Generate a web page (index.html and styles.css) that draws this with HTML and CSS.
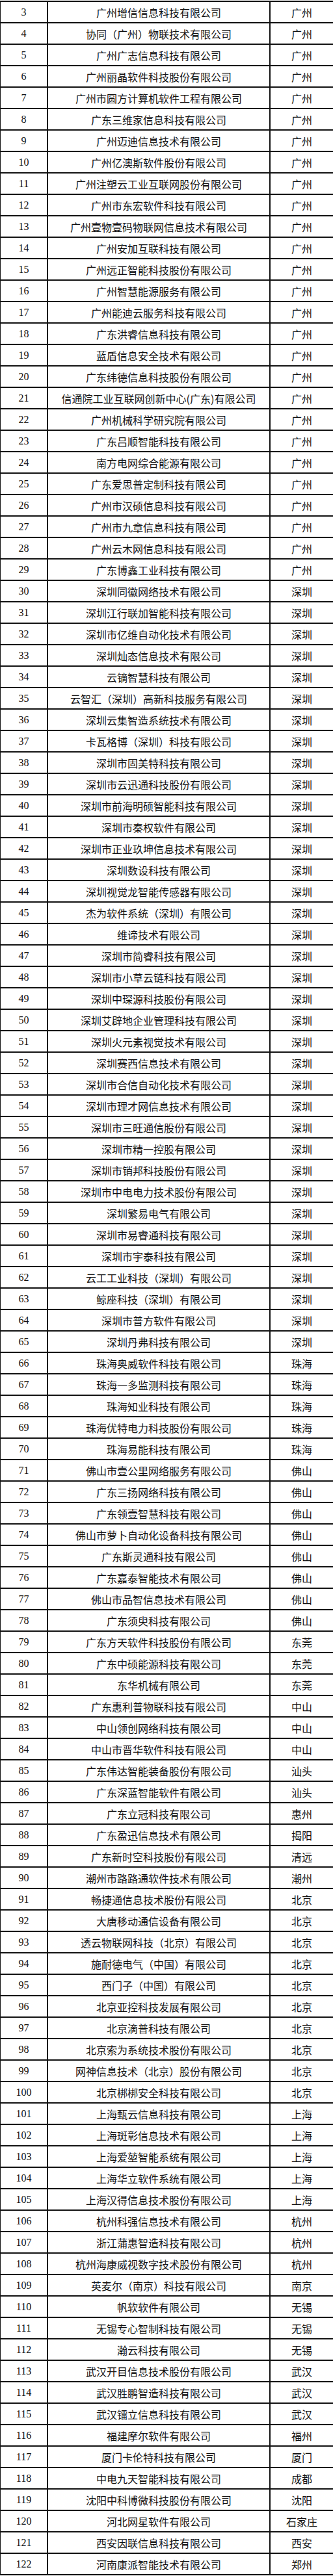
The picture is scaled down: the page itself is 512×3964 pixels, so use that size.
FILE: index.html
```html
<!DOCTYPE html>
<html lang="zh-CN">
<head>
<meta charset="utf-8">
<title>名单</title>
<link rel="stylesheet" href="styles.css">
</head>
<body>
<div class="tbl">
<div class="r"><span class="n">3</span><span class="c">广州增信信息科技有限公司</span><span class="t">广州</span></div>
<div class="r"><span class="n">4</span><span class="c">协同（广州）物联技术有限公司</span><span class="t">广州</span></div>
<div class="r"><span class="n">5</span><span class="c">广州广志信息科技有限公司</span><span class="t">广州</span></div>
<div class="r"><span class="n">6</span><span class="c">广州丽晶软件科技股份有限公司</span><span class="t">广州</span></div>
<div class="r"><span class="n">7</span><span class="c">广州市圆方计算机软件工程有限公司</span><span class="t">广州</span></div>
<div class="r"><span class="n">8</span><span class="c">广东三维家信息科技有限公司</span><span class="t">广州</span></div>
<div class="r"><span class="n">9</span><span class="c">广州迈迪信息技术有限公司</span><span class="t">广州</span></div>
<div class="r"><span class="n">10</span><span class="c">广州亿澳斯软件股份有限公司</span><span class="t">广州</span></div>
<div class="r"><span class="n">11</span><span class="c">广州注塑云工业互联网股份有限公司</span><span class="t">广州</span></div>
<div class="r"><span class="n">12</span><span class="c">广州市东宏软件科技有限公司</span><span class="t">广州</span></div>
<div class="r"><span class="n">13</span><span class="c">广州壹物壹码物联网信息技术有限公司</span><span class="t">广州</span></div>
<div class="r"><span class="n">14</span><span class="c">广州安加互联科技有限公司</span><span class="t">广州</span></div>
<div class="r"><span class="n">15</span><span class="c">广州远正智能科技股份有限公司</span><span class="t">广州</span></div>
<div class="r"><span class="n">16</span><span class="c">广州智慧能源服务有限公司</span><span class="t">广州</span></div>
<div class="r"><span class="n">17</span><span class="c">广州能迪云服务科技有限公司</span><span class="t">广州</span></div>
<div class="r"><span class="n">18</span><span class="c">广东洪睿信息科技有限公司</span><span class="t">广州</span></div>
<div class="r"><span class="n">19</span><span class="c">蓝盾信息安全技术有限公司</span><span class="t">广州</span></div>
<div class="r"><span class="n">20</span><span class="c">广东纬德信息科技股份有限公司</span><span class="t">广州</span></div>
<div class="r"><span class="n">21</span><span class="c">信通院工业互联网创新中心(广东)有限公司</span><span class="t">广州</span></div>
<div class="r"><span class="n">22</span><span class="c">广州机械科学研究院有限公司</span><span class="t">广州</span></div>
<div class="r"><span class="n">23</span><span class="c">广东吕顺智能科技有限公司</span><span class="t">广州</span></div>
<div class="r"><span class="n">24</span><span class="c">南方电网综合能源有限公司</span><span class="t">广州</span></div>
<div class="r"><span class="n">25</span><span class="c">广东爱思普定制科技有限公司</span><span class="t">广州</span></div>
<div class="r"><span class="n">26</span><span class="c">广州市汉硕信息科技有限公司</span><span class="t">广州</span></div>
<div class="r"><span class="n">27</span><span class="c">广州市九章信息科技有限公司</span><span class="t">广州</span></div>
<div class="r"><span class="n">28</span><span class="c">广州云木网信息科技有限公司</span><span class="t">广州</span></div>
<div class="r"><span class="n">29</span><span class="c">广东博鑫工业科技有限公司</span><span class="t">广州</span></div>
<div class="r"><span class="n">30</span><span class="c">深圳同徽网络技术有限公司</span><span class="t">深圳</span></div>
<div class="r"><span class="n">31</span><span class="c">深圳江行联加智能科技有限公司</span><span class="t">深圳</span></div>
<div class="r"><span class="n">32</span><span class="c">深圳市亿维自动化技术有限公司</span><span class="t">深圳</span></div>
<div class="r"><span class="n">33</span><span class="c">深圳灿态信息技术有限公司</span><span class="t">深圳</span></div>
<div class="r"><span class="n">34</span><span class="c">云镝智慧科技有限公司</span><span class="t">深圳</span></div>
<div class="r"><span class="n">35</span><span class="c">云智汇（深圳）高新科技服务有限公司</span><span class="t">深圳</span></div>
<div class="r"><span class="n">36</span><span class="c">深圳云集智造系统技术有限公司</span><span class="t">深圳</span></div>
<div class="r"><span class="n">37</span><span class="c">卡瓦格博（深圳）科技有限公司</span><span class="t">深圳</span></div>
<div class="r"><span class="n">38</span><span class="c">深圳市固美特科技有限公司</span><span class="t">深圳</span></div>
<div class="r"><span class="n">39</span><span class="c">深圳市云迅通科技股份有限公司</span><span class="t">深圳</span></div>
<div class="r"><span class="n">40</span><span class="c">深圳市前海明硕智能科技有限公司</span><span class="t">深圳</span></div>
<div class="r"><span class="n">41</span><span class="c">深圳市秦权软件有限公司</span><span class="t">深圳</span></div>
<div class="r"><span class="n">42</span><span class="c">深圳市正业玖坤信息技术有限公司</span><span class="t">深圳</span></div>
<div class="r"><span class="n">43</span><span class="c">深圳数设科技有限公司</span><span class="t">深圳</span></div>
<div class="r"><span class="n">44</span><span class="c">深圳视觉龙智能传感器有限公司</span><span class="t">深圳</span></div>
<div class="r"><span class="n">45</span><span class="c">杰为软件系统（深圳）有限公司</span><span class="t">深圳</span></div>
<div class="r"><span class="n">46</span><span class="c">维谛技术有限公司</span><span class="t">深圳</span></div>
<div class="r"><span class="n">47</span><span class="c">深圳市简睿科技有限公司</span><span class="t">深圳</span></div>
<div class="r"><span class="n">48</span><span class="c">深圳市小草云链科技有限公司</span><span class="t">深圳</span></div>
<div class="r"><span class="n">49</span><span class="c">深圳中琛源科技股份有限公司</span><span class="t">深圳</span></div>
<div class="r"><span class="n">50</span><span class="c">深圳艾辟地企业管理科技有限公司</span><span class="t">深圳</span></div>
<div class="r"><span class="n">51</span><span class="c">深圳火元素视觉技术有限公司</span><span class="t">深圳</span></div>
<div class="r"><span class="n">52</span><span class="c">深圳赛西信息技术有限公司</span><span class="t">深圳</span></div>
<div class="r"><span class="n">53</span><span class="c">深圳市合信自动化技术有限公司</span><span class="t">深圳</span></div>
<div class="r"><span class="n">54</span><span class="c">深圳市理才网信息技术有限公司</span><span class="t">深圳</span></div>
<div class="r"><span class="n">55</span><span class="c">深圳市三旺通信股份有限公司</span><span class="t">深圳</span></div>
<div class="r"><span class="n">56</span><span class="c">深圳市精一控股有限公司</span><span class="t">深圳</span></div>
<div class="r"><span class="n">57</span><span class="c">深圳市销邦科技股份有限公司</span><span class="t">深圳</span></div>
<div class="r"><span class="n">58</span><span class="c">深圳市中电电力技术股份有限公司</span><span class="t">深圳</span></div>
<div class="r"><span class="n">59</span><span class="c">深圳繁易电气有限公司</span><span class="t">深圳</span></div>
<div class="r"><span class="n">60</span><span class="c">深圳市易睿通科技有限公司</span><span class="t">深圳</span></div>
<div class="r"><span class="n">61</span><span class="c">深圳市宇泰科技有限公司</span><span class="t">深圳</span></div>
<div class="r"><span class="n">62</span><span class="c">云工工业科技（深圳）有限公司</span><span class="t">深圳</span></div>
<div class="r"><span class="n">63</span><span class="c">鲸座科技（深圳）有限公司</span><span class="t">深圳</span></div>
<div class="r"><span class="n">64</span><span class="c">深圳市普方软件有限公司</span><span class="t">深圳</span></div>
<div class="r"><span class="n">65</span><span class="c">深圳丹弗科技有限公司</span><span class="t">深圳</span></div>
<div class="r"><span class="n">66</span><span class="c">珠海奥威软件科技有限公司</span><span class="t">珠海</span></div>
<div class="r"><span class="n">67</span><span class="c">珠海一多监测科技有限公司</span><span class="t">珠海</span></div>
<div class="r"><span class="n">68</span><span class="c">珠海知业科技有限公司</span><span class="t">珠海</span></div>
<div class="r"><span class="n">69</span><span class="c">珠海优特电力科技股份有限公司</span><span class="t">珠海</span></div>
<div class="r"><span class="n">70</span><span class="c">珠海易能科技有限公司</span><span class="t">珠海</span></div>
<div class="r"><span class="n">71</span><span class="c">佛山市壹公里网络服务有限公司</span><span class="t">佛山</span></div>
<div class="r"><span class="n">72</span><span class="c">广东三扬网络科技有限公司</span><span class="t">佛山</span></div>
<div class="r"><span class="n">73</span><span class="c">广东领壹智慧科技有限公司</span><span class="t">佛山</span></div>
<div class="r"><span class="n">74</span><span class="c">佛山市萝卜自动化设备科技有限公司</span><span class="t">佛山</span></div>
<div class="r"><span class="n">75</span><span class="c">广东斯灵通科技有限公司</span><span class="t">佛山</span></div>
<div class="r"><span class="n">76</span><span class="c">广东嘉泰智能技术有限公司</span><span class="t">佛山</span></div>
<div class="r"><span class="n">77</span><span class="c">佛山市品智信息技术有限公司</span><span class="t">佛山</span></div>
<div class="r"><span class="n">78</span><span class="c">广东须臾科技有限公司</span><span class="t">佛山</span></div>
<div class="r"><span class="n">79</span><span class="c">广东方天软件科技股份有限公司</span><span class="t">东莞</span></div>
<div class="r"><span class="n">80</span><span class="c">广东中硕能源科技有限公司</span><span class="t">东莞</span></div>
<div class="r"><span class="n">81</span><span class="c">东华机械有限公司</span><span class="t">东莞</span></div>
<div class="r"><span class="n">82</span><span class="c">广东惠利普物联科技有限公司</span><span class="t">中山</span></div>
<div class="r"><span class="n">83</span><span class="c">中山领创网络科技有限公司</span><span class="t">中山</span></div>
<div class="r"><span class="n">84</span><span class="c">中山市晋华软件科技有限公司</span><span class="t">中山</span></div>
<div class="r"><span class="n">85</span><span class="c">广东伟达智能装备股份有限公司</span><span class="t">汕头</span></div>
<div class="r"><span class="n">86</span><span class="c">广东深蓝智能软件有限公司</span><span class="t">汕头</span></div>
<div class="r"><span class="n">87</span><span class="c">广东立冠科技有限公司</span><span class="t">惠州</span></div>
<div class="r"><span class="n">88</span><span class="c">广东盈迅信息技术有限公司</span><span class="t">揭阳</span></div>
<div class="r"><span class="n">89</span><span class="c">广东新时空科技股份有限公司</span><span class="t">清远</span></div>
<div class="r"><span class="n">90</span><span class="c">潮州市路路通软件技术有限公司</span><span class="t">潮州</span></div>
<div class="r"><span class="n">91</span><span class="c">畅捷通信息技术股份有限公司</span><span class="t">北京</span></div>
<div class="r"><span class="n">92</span><span class="c">大唐移动通信设备有限公司</span><span class="t">北京</span></div>
<div class="r"><span class="n">93</span><span class="c">透云物联网科技（北京）有限公司</span><span class="t">北京</span></div>
<div class="r"><span class="n">94</span><span class="c">施耐德电气（中国）有限公司</span><span class="t">北京</span></div>
<div class="r"><span class="n">95</span><span class="c">西门子（中国）有限公司</span><span class="t">北京</span></div>
<div class="r"><span class="n">96</span><span class="c">北京亚控科技发展有限公司</span><span class="t">北京</span></div>
<div class="r"><span class="n">97</span><span class="c">北京滴普科技有限公司</span><span class="t">北京</span></div>
<div class="r"><span class="n">98</span><span class="c">北京索为系统技术股份有限公司</span><span class="t">北京</span></div>
<div class="r"><span class="n">99</span><span class="c">网神信息技术（北京）股份有限公司</span><span class="t">北京</span></div>
<div class="r"><span class="n">100</span><span class="c">北京梆梆安全科技有限公司</span><span class="t">北京</span></div>
<div class="r"><span class="n">101</span><span class="c">上海甄云信息科技有限公司</span><span class="t">上海</span></div>
<div class="r"><span class="n">102</span><span class="c">上海斑彰信息技术有限公司</span><span class="t">上海</span></div>
<div class="r"><span class="n">103</span><span class="c">上海爱堃智能系统有限公司</span><span class="t">上海</span></div>
<div class="r"><span class="n">104</span><span class="c">上海华立软件系统有限公司</span><span class="t">上海</span></div>
<div class="r"><span class="n">105</span><span class="c">上海汉得信息技术股份有限公司</span><span class="t">上海</span></div>
<div class="r"><span class="n">106</span><span class="c">杭州科强信息技术有限公司</span><span class="t">杭州</span></div>
<div class="r"><span class="n">107</span><span class="c">浙江蒲惠智造科技有限公司</span><span class="t">杭州</span></div>
<div class="r"><span class="n">108</span><span class="c">杭州海康威视数字技术股份有限公司</span><span class="t">杭州</span></div>
<div class="r"><span class="n">109</span><span class="c">英麦尔（南京）科技有限公司</span><span class="t">南京</span></div>
<div class="r"><span class="n">110</span><span class="c">帆软软件有限公司</span><span class="t">无锡</span></div>
<div class="r"><span class="n">111</span><span class="c">无锡专心智制科技有限公司</span><span class="t">无锡</span></div>
<div class="r"><span class="n">112</span><span class="c">瀚云科技有限公司</span><span class="t">无锡</span></div>
<div class="r"><span class="n">113</span><span class="c">武汉开目信息技术股份有限公司</span><span class="t">武汉</span></div>
<div class="r"><span class="n">114</span><span class="c">武汉胜鹏智造科技有限公司</span><span class="t">武汉</span></div>
<div class="r"><span class="n">115</span><span class="c">武汉镭立信息科技有限公司</span><span class="t">武汉</span></div>
<div class="r"><span class="n">116</span><span class="c">福建摩尔软件有限公司</span><span class="t">福州</span></div>
<div class="r"><span class="n">117</span><span class="c">厦门卡伦特科技有限公司</span><span class="t">厦门</span></div>
<div class="r"><span class="n">118</span><span class="c">中电九天智能科技有限公司</span><span class="t">成都</span></div>
<div class="r"><span class="n">119</span><span class="c">沈阳中科博微科技股份有限公司</span><span class="t">沈阳</span></div>
<div class="r"><span class="n">120</span><span class="c">河北网星软件有限公司</span><span class="t">石家庄</span></div>
<div class="r"><span class="n">121</span><span class="c">西安因联信息科技有限公司</span><span class="t">西安</span></div>
<div class="r"><span class="n">122</span><span class="c">河南康派智能技术有限公司</span><span class="t">郑州</span></div>
</div>
</body>
</html>
```
FILE: styles.css
```css
html, body {
  margin: 0;
  padding: 0;
  background: #ffffff;
}

.tbl {
  margin-top: 1px;
  border-left: 1px solid #111;
  border-bottom: 2px solid #111;
  color: #111;
}

.r {
  display: grid;
  grid-template-columns: 71px 342px 1fr;
  height: 33px;
  box-sizing: border-box;
  border-top: 2px solid #111;
}

.n, .c, .t {
  display: flex;
  align-items: center;
  justify-content: center;
  padding-top: 1px;
  white-space: nowrap;
  box-sizing: border-box;
}

.n {
  font-family: "Liberation Serif", "Times New Roman", serif;
  font-size: 16px;
}

.c, .t {
  border-left: 2px solid #111;
  font-family: "Noto Sans CJK SC", "Noto Sans", sans-serif;
  font-size: 16px;
  font-weight: 400;
}
```
